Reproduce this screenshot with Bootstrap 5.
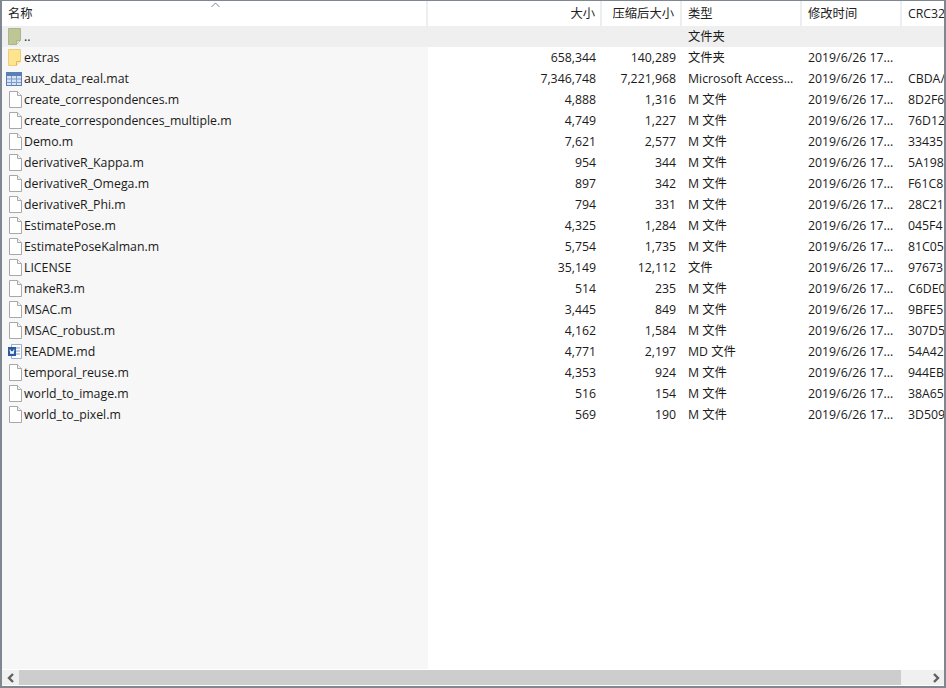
<!DOCTYPE html>
<html lang="zh">
<head>
  <meta charset="utf-8" />
  <title>压缩包</title>
  <meta name="viewport" content="width=device-width, initial-scale=1" />
  <link href="https://cdn.jsdelivr.net/npm/bootstrap@5.3.0/dist/css/bootstrap.min.css" rel="stylesheet" />
  <style>
    html, body { height: 100%; overflow: hidden; }
    body { font-family: "Open Sans", "Noto Sans CJK SC", sans-serif; font-size: 12.3px; color: #1a1a1a; background: #fff; }
    .win { height: 688px; border: 2px solid #7f8790; border-width: 1px 2px 2px 2px; }
    .head-row { height: 25px; flex: none; }
    .head-cell { flex: none; border-right: 2px solid #eceef0; padding: 0 6px; line-height: 25px; position: relative; white-space: nowrap; overflow: hidden; color: #222; }
    .head-cell.text-end { padding-right: 5px; }
    .h-name { width: 426px; }
    .h-size { width: 174px; }
    .h-comp { width: 80px; }
    .h-comp.text-end { padding-right: 6px; }
    .h-type { width: 120px; }
    .h-time { width: 100px; }
    .h-crc { width: 42px; border-right: 0; }
    .file-row { height: 21px; line-height: 21px; }
    .file-row.up { background: #efefef; }
    .file-row.up .c-name { background: #efefef; }
    .c-name { width: 426px; flex: none; background: #f7f7f7; display: flex; align-items: center; white-space: nowrap; }
    .c-size { width: 174px; flex: none; text-align: right; padding-right: 6px; }
    .c-comp { width: 80px; flex: none; text-align: right; padding-right: 6px; }
    .c-type { width: 120px; flex: none; padding-left: 6px; white-space: nowrap; overflow: hidden; }
    .c-time { width: 100px; flex: none; padding-left: 6px; white-space: nowrap; overflow: hidden; }
    .c-crc { width: 42px; flex: none; padding-left: 6px; white-space: nowrap; overflow: hidden; }
    .ico-slot { width: 22px; flex: none; margin-left: 1px; margin-right: -1px; display: flex; justify-content: center; align-items: center; }
    .ico-shift { margin-left: 2px; }
    .filler-col { width: 426px; background: #f7f7f7; }
    .sort-mark { position: absolute; left: 209px; top: 1px; }
    .hbar { height: 15px; background: #f0f0f0; flex: none; margin: 1px 0; }
    .hbar-btn { width: 17px; flex: none; display: flex; align-items: center; justify-content: center; }
    .hbar-thumb { background: #cdcdcd; width: 882px; flex: none; }
  </style>
</head>
<body>
  <div class="win d-flex flex-column">
    <div class="head-row d-flex">
      <div class="head-cell h-name">名称
        <svg class="sort-mark" width="9" height="6" viewBox="0 0 9 6"><path d="M.5 5 4.500 1 8.500 5" fill="none" stroke="#888" stroke-width="1"/></svg>
      </div>
      <div class="head-cell h-size text-end">大小</div>
      <div class="head-cell h-comp text-end">压缩后大小</div>
      <div class="head-cell h-type">类型</div>
      <div class="head-cell h-time">修改时间</div>
      <div class="head-cell h-crc">CRC32</div>
    </div>
    <div id="rows"></div>
    <div class="flex-fill d-flex"><div class="filler-col"></div></div>
    <div class="hbar d-flex">
      <div class="hbar-btn"><svg width="8" height="10" viewBox="0 0 8 10"><path d="M6 1 2 5 6 9" fill="none" stroke="#606060" stroke-width="2.400"/></svg></div>
      <div class="hbar-thumb"></div>
      <div class="flex-fill"></div>
      <div class="hbar-btn"><svg width="8" height="10" viewBox="0 0 8 10"><path d="M2 1 6 5 2 9" fill="none" stroke="#606060" stroke-width="2.400"/></svg></div>
    </div>
  </div>

  <script>
    const ICONS = {
      up: '<svg class="ico-shift" width="14" height="17" viewBox="0 0 14 17"><path d="M.5.5h12v12l-4 4H.5z" fill="#bcc795" stroke="#a9b58a"/><path d="M8.500 16.500v-4h4" fill="#dfe3c0" stroke="#a9b58a"/></svg>',
      folder: '<svg class="ico-shift" width="14" height="17" viewBox="0 0 14 17"><path d="M.5.5h12v12l-4 4H.5z" fill="#ffe48f" stroke="#eccd7a"/><path d="M8.500 16.500v-4h4" fill="#fff0c0" stroke="#e0b95c"/></svg>',
      table: '<svg width="16" height="14" viewBox="0 0 16 14"><rect x=".5" y=".5" width="15" height="13" fill="#d6e2f5" stroke="#5a7fb5"/><rect x="1" y="1" width="14" height="3" fill="#5a7fb5"/><path d="M1 7h14M1 10.500h14M5.500 4v9M10.500 4v9" stroke="#7f9cc8" fill="none"/></svg>',
      file: '<svg class="ico-shift" width="13" height="17" viewBox="0 0 13 17"><path d="M.5.5h8l4 4v12H.5z" fill="#fff" stroke="#a8a8a8"/><path d="M8.500.5v4h4" fill="#f2f2f2" stroke="#a8a8a8"/></svg>',
      doc: '<svg class="ico-shift" width="14" height="15" viewBox="0 0 14 15"><path d="M3.500.5h10v14h-10z" fill="#fff" stroke="#9ab0cc"/><path d="M8 4h4M8 7h4M8 10h4" stroke="#7d9ccb"/><rect x="0" y="3" width="8" height="9" fill="#2b5a9e"/><path d="M2 5.500 3 10l1-3 1 3 1-4.500" fill="none" stroke="#fff"/></svg>'
    };

    const FILES = [
      ["up", "..", "", "", "文件夹", "", ""],
      ["folder", "extras", "658,344", "140,289", "文件夹", "2019/6/26 17...", ""],
      ["table", "aux_data_real.mat", "7,346,748", "7,221,968", "Microsoft Access...", "2019/6/26 17...", "CBDA/"],
      ["file", "create_correspondences.m", "4,888", "1,316", "M 文件", "2019/6/26 17...", "8D2F6"],
      ["file", "create_correspondences_multiple.m", "4,749", "1,227", "M 文件", "2019/6/26 17...", "76D12"],
      ["file", "Demo.m", "7,621", "2,577", "M 文件", "2019/6/26 17...", "33435"],
      ["file", "derivativeR_Kappa.m", "954", "344", "M 文件", "2019/6/26 17...", "5A198"],
      ["file", "derivativeR_Omega.m", "897", "342", "M 文件", "2019/6/26 17...", "F61C8"],
      ["file", "derivativeR_Phi.m", "794", "331", "M 文件", "2019/6/26 17...", "28C21"],
      ["file", "EstimatePose.m", "4,325", "1,284", "M 文件", "2019/6/26 17...", "045F4"],
      ["file", "EstimatePoseKalman.m", "5,754", "1,735", "M 文件", "2019/6/26 17...", "81C05"],
      ["file", "LICENSE", "35,149", "12,112", "文件", "2019/6/26 17...", "97673"],
      ["file", "makeR3.m", "514", "235", "M 文件", "2019/6/26 17...", "C6DE0"],
      ["file", "MSAC.m", "3,445", "849", "M 文件", "2019/6/26 17...", "9BFE5"],
      ["file", "MSAC_robust.m", "4,162", "1,584", "M 文件", "2019/6/26 17...", "307D5"],
      ["doc", "README.md", "4,771", "2,197", "MD 文件", "2019/6/26 17...", "54A42"],
      ["file", "temporal_reuse.m", "4,353", "924", "M 文件", "2019/6/26 17...", "944EB"],
      ["file", "world_to_image.m", "516", "154", "M 文件", "2019/6/26 17...", "38A65"],
      ["file", "world_to_pixel.m", "569", "190", "M 文件", "2019/6/26 17...", "3D509"]
    ];

    const rows = document.getElementById("rows");
    FILES.forEach(f => {
      const row = document.createElement("div");
      row.className = "file-row d-flex" + (f[0] === "up" ? " up" : "");
      row.innerHTML = `
        <div class="c-name"><span class="ico-slot">${ICONS[f[0]]}</span>${f[1]}</div>
        <div class="c-size">${f[2]}</div>
        <div class="c-comp">${f[3]}</div>
        <div class="c-type">${f[4]}</div>
        <div class="c-time">${f[5]}</div>
        <div class="c-crc">${f[6]}</div>
      `;
      rows.appendChild(row);
    });
  </script>
  <script src="https://cdn.jsdelivr.net/npm/bootstrap@5.3.0/dist/js/bootstrap.bundle.min.js"></script>
</body>
</html>
